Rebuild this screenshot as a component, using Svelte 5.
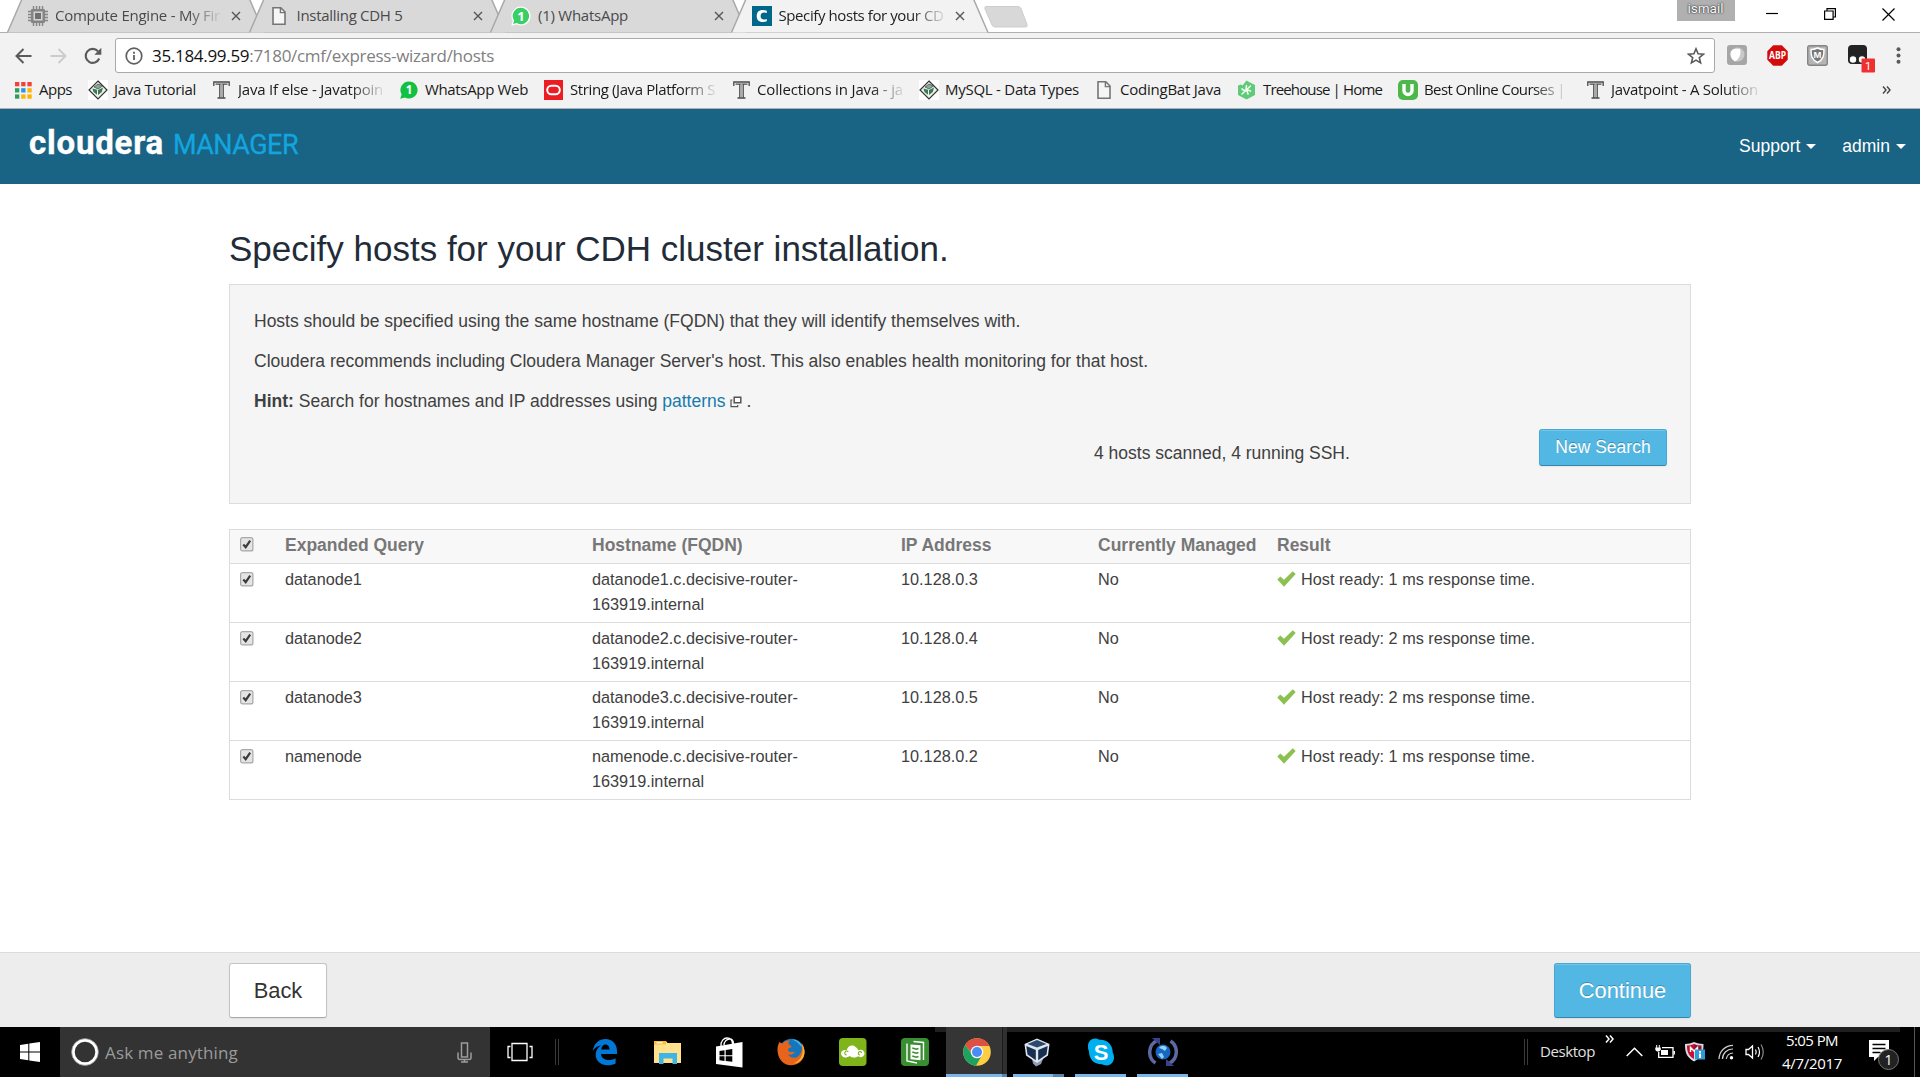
<script>
  const tabs = [
    { title: 'Compute Engine - My Fir', icon: 'chip', width: 165, fade: true },
    { title: 'Installing CDH 5', icon: 'page', width: 106 },
    { title: '(1) WhatsApp', icon: 'wa', width: 90 },
    { title: 'Specify hosts for your CD', icon: 'cdh', width: 165, fade: true, active: true }
  ];

  const bookmarks = [
    { label: 'Apps', icon: 'apps', gap: 24, span: 73, width: 33 },
    { label: 'Java Tutorial', icon: 'tp', gap: 26, span: 125, width: 82 },
    { label: 'Java If else - Javatpoin', icon: 'tee', gap: 25, span: 187, width: 145, fade: true },
    { label: 'WhatsApp Web', icon: 'wa2', gap: 25, span: 144, width: 103 },
    { label: 'String (Java Platform S', icon: 'oracle', gap: 26, span: 189, width: 145, fade: true },
    { label: 'Collections in Java - ja', icon: 'tee', gap: 24, span: 186, width: 146, fade: true },
    { label: 'MySQL - Data Types', icon: 'tp', gap: 26, span: 178, width: 134 },
    { label: 'CodingBat Java', icon: 'page', gap: 23, span: 140, width: 101 },
    { label: 'Treehouse | Home', icon: 'tree', gap: 26, span: 161, width: 119 },
    { label: 'Best Online Courses |', icon: 'udemy', gap: 26, span: 189, width: 141, fade: true },
    { label: 'Javatpoint - A Solution', icon: 'tee', gap: 24, span: 180, width: 147, fade: true }
  ];

  const rows = [
    { name: 'datanode1', ip: '10.128.0.3', ms: 1 },
    { name: 'datanode2', ip: '10.128.0.4', ms: 2 },
    { name: 'datanode3', ip: '10.128.0.5', ms: 2 },
    { name: 'namenode', ip: '10.128.0.2', ms: 1 }
  ];

  const apps = [
    { icon: 'edge' }, { icon: 'files' }, { icon: 'store' }, { icon: 'firefox' }, { icon: 'cloud' }, { icon: 'docs' },
    { icon: 'chrome', active: true, stacked: true }, { icon: 'vbox', open: true, stacked: true },
    { icon: 'skype', open: true }, { icon: 'sync', open: true }
  ];

  // Spreads a label's letters so that it takes up the given width.
  function fit(node, width) {
    node.style.letterSpacing = '0px';
    const natural = node.getBoundingClientRect().width;
    node.style.letterSpacing = `${(width - natural) / node.textContent.length}px`;
  }
</script>

{#snippet glyph(kind)}
  {#if kind === 'chip'}
    <svg width="20" height="20" viewBox="0 0 20 20"><path d="M5.5 0v20M8.5 0v20M11.5 0v20M14.5 0v20M0 5.5h20M0 8.5h20M0 11.5h20M0 14.5h20" stroke="#858585" stroke-width="1.4" /><rect x="3" y="3" width="14" height="14" rx="1" fill="#858585" /><rect x="5.5" y="5.5" width="9" height="9" fill="#d4d4d4" /><rect x="7" y="7" width="6" height="6" fill="#707070" /></svg>
  {:else if kind === 'page'}
    <svg width="14" height="20" viewBox="0 0 14 20"><path d="M1 1.8h7.8L13 6v12.2H1z" fill="#f6f6f6" stroke="#757575" stroke-width="1.6" /><path d="M8.4 2v4.6H13" fill="none" stroke="#757575" stroke-width="1.4" /></svg>
  {:else if kind === 'wa' || kind === 'wa2'}
    <svg width={kind === 'wa' ? 20 : 18} height={kind === 'wa' ? 20 : 18} viewBox="0 0 20 20"><path d="M10 .5a9.5 9.5 0 1 1-4.6 17.8L.3 19.8l1.5-5A9.5 9.5 0 0 1 10 .5z" fill={kind === 'wa' ? '#fff' : '#12c144'} /><path d="M10 1.8A8.2 8.2 0 1 1 5.6 17l-3.5 1 1-3.4A8.2 8.2 0 0 1 10 1.8z" fill={kind === 'wa' ? '#3ace67' : '#12c144'} /><text x="10" y="14.6" text-anchor="middle" font-family="Open Sans" font-weight="700" font-size="13" fill="#fff">1</text></svg>
  {:else if kind === 'cdh'}
    <svg width="20" height="20" viewBox="0 0 20 20"><rect width="20" height="20" fill="#00678a" /><path d="M14.8 7V4.8C11.5 3.300 4.700 3 4.700 10s6.800 6.700 10.100 5.200V13c-2.400 1-6.200 1-6.200-3s3.800-4 6.200-3z" fill="#fff" /></svg>
  {:else if kind === 'apps'}
    <svg width="17" height="17" viewBox="0 0 17 17">
      {#each ['#f44336', '#f44336', '#f44336', '#2da05f', '#2196f3', '#ffb300', '#2da05f', '#ffb300', '#ffb300'] as c, i}
        <rect x={(i % 3) * 6.2} y={Math.floor(i / 3) * 6.2} width="4.300" height="4.300" fill={c} />
      {/each}
    </svg>
  {:else if kind === 'tp'}
    <svg width="20" height="20" viewBox="0 0 20 20"><rect width="20" height="20" fill="#fff" /><path d="M10 1l9 9-9 9-9-9z" fill="#eef2ef" stroke="#333" stroke-width="1.200" /><path d="M4.500 8.500l4.500 1.200v5L5.500 12zM10 10l5-2.500-1.200 4.500-3.800 3z" fill="#3c7a55" /><path d="M6 7l4-3 4.500 2-4.500 3z" fill="#86a894" stroke="#444" stroke-width=".7" /></svg>
  {:else if kind === 'tee'}
    <svg width="17" height="18" viewBox="0 0 17 18"><path d="M.8 5V1h15.400v4M6.800 3v13.500M10.200 3v13.500M4.500 17h8M2.500 3.200h12" fill="none" stroke="#4a4a4a" stroke-width="1.300" /><path d="M8.500 2v14" stroke="#aaa" stroke-width="2" /></svg>
  {:else if kind === 'oracle'}
    <svg width="19" height="20" viewBox="0 0 19 20"><rect width="19" height="20" fill="#ec1c24" /><rect x="3.200" y="5.800" width="12.600" height="8.400" rx="4.200" fill="none" stroke="#fff" stroke-width="2" /></svg>
  {:else if kind === 'tree'}
    <svg width="19" height="20" viewBox="0 0 19 20"><path d="M9.500.5l3 1.800 5.500 2.700v10l-8.500 4.500L1 15V5.500l3-1 1.500 1z" fill="#5fca78" /><path d="M5 14L13.500 6M9 9.500L9.500 5.500M9.500 9.500l4 1.500M8 11l-3-2M10 11l1 3" stroke="#f0fff0" stroke-width="1.600" fill="none" stroke-linecap="round" /></svg>
  {:else if kind === 'udemy'}
    <svg width="20" height="20" viewBox="0 0 20 20"><rect width="20" height="20" rx="5" fill="#4cb84a" /><path d="M6 4v6.500a4 4 0 0 0 8 0V4" fill="none" stroke="#fff" stroke-width="3.400" /></svg>
  {:else if kind === 'edge'}
    <svg width="26" height="28" viewBox="0 0 26 28"><path d="M.8 12.700C2 5.500 7 1 13.500 1 20.500 1 25 6 25 13v3H9c.3 4 4 6 8 6 2.500 0 4.700-.7 6.600-1.800v5.300C21.500 26.700 18.800 27.300 16 27.300c-7.500 0-12.300-4.300-12.300-10.500 0-4.300 2.300-7.600 5.800-9.600C5.700 7.700 2.700 9.700.8 12.700zM9.200 11.500h8.300c0-3.300-1.600-5-4.100-5-2.300 0-3.900 2-4.200 5z" fill="#0078d7" /></svg>
  {:else if kind === 'files'}
    <svg width="28" height="24" viewBox="0 0 28 24"><path d="M1 1h12l1.500 2H28v20H1z" fill="#ffe18e" /><path d="M1 1h12v3.500H1z" fill="#fbc02d" /><path d="M3.500 2.200h6v1.200h-6z" fill="#fff" /><path d="M6 24V13h18v11h-4.500v-5.500h-9V24z" fill="#3fb5e5" /></svg>
  {:else if kind === 'store'}
    <svg width="27" height="31" viewBox="0 0 27 31"><path d="M0 9.500L26.500 5v25.500L0 27z" fill="#fff" /><path d="M5 9C4.500 4 8 1 11 1c3.500 0 5.500 2.500 5.500 6M8 8c0-3 2.500-6 5.500-6 3 0 4 2 4 5" fill="none" stroke="#fff" stroke-width="1.300" /><path d="M3.500 14l5-.8v5h-5zM9.700 13l6.600-1v6.200H9.700zM3.500 19.300h5v4.600l-5-.6zM9.700 19.300h6.600v5.500l-6.600-.8z" fill="#000" /></svg>
  {:else if kind === 'firefox'}
    <svg width="28" height="28" viewBox="0 0 28 28"><circle cx="14.500" cy="13.500" r="12.800" fill="#1676bd" /><path d="M15 1.200A12.700 12.700 0 0 1 26 10l-6-6z" fill="#52bce9" /><path d="M2.500 4C0 8 .5 12 .7 14c.4 7 6 13.300 13.300 13.300S27.500 22 27.500 14c0-4-1.500-7.500-3-9 1 5 .5 10-3.200 13.200-4 3.300-9 1-10-1.700 3 .7 5-.6 6.700-2-1.500-1.200-3-.7-5-.5-2-.5-2.500-2.500-1.500-3.500 1-.7 2.500-.5 3-1.500 0-1-1.800-1.700-3-3-.3-1.500.5-2.700 1.500-3.700C9 2.500 7 4 6 5.500 4.500 5 3.500 5 2.500 4z" fill="#e8641b" /><path d="M24.500 6c3 8 .5 16-8 19.500 6-.5 11-5 11-11.500 0-3.500-1.300-6.500-3-8z" fill="#fbb52c" /></svg>
  {:else if kind === 'cloud'}
    <svg width="28" height="28" viewBox="0 0 28 28"><rect width="27.500" height="28" rx="4" fill="#7fb41a" /><path d="M2 15.500c0-3 3.500-4.500 5.500-3C8.500 8 13.500 6 16.500 9c1.700 1 2.500 2 2.500 3.300 3.500-1.800 7 .7 6.500 3.700-.5 3-4 4-6.500 2.300-2.500 2-7 1.200-8.500-.3C6.500 21 2 19 2 15.500z" fill="#fff" /><path d="M7.800 17a2 2 0 1 1 1.500-3.200M21 17a1.700 1.700 0 1 1 1.700-2" fill="none" stroke="#7fb41a" stroke-width="1.100" /></svg>
  {:else if kind === 'docs'}
    <svg width="28" height="28" viewBox="0 0 28 28"><rect width="28" height="28" rx="4" fill="#388e30" /><path d="M12.500 3.500l10 1v17.500M6 5.500V23l10 2" fill="none" stroke="#fff" stroke-width="1.400" /><path d="M9.500 6.500l10 .8v15l-10-1z" fill="#fff" /><path d="M11.300 10l4 1.300 2.200-.8M11.300 14l4 1.300 2.200-.8M11.300 18l4 1.300 2.200-.8" stroke="#388e30" stroke-width="1.500" fill="none" /></svg>
  {:else if kind === 'chrome'}
    <svg width="28" height="28" viewBox="0 0 28 28"><circle cx="14" cy="14" r="13.800" fill="#ffcd41" /><path d="M2.100 7A13.800 13.800 0 0 1 26.300 8H14L8.500 15z" fill="#dd5144" /><path d="M2.100 7A13.800 13.800 0 0 0 13 27.800L19 17l-9 .5z" fill="#1da261" /><circle cx="14" cy="14" r="6.300" fill="#f4f4f4" /><circle cx="14" cy="14" r="5" fill="#4a8bf5" /></svg>
  {:else if kind === 'vbox'}
    <svg class="vbox" width="26" height="29" viewBox="0 0 26 29"><path d="M8 21h11l-2 5-5 2.500-3-3z" fill="#8f9bb5" /><path d="M13 .5L25.500 6 24 17.500 13 25 2 17.500.5 6z" fill="#dfe6ee" /><path d="M13 2l9.500 4L13 9.500 3.500 6z" fill="#2c4a70" /><path d="M2.300 8l9.500 4v10.300L3.500 16.500zM23.700 8l-9.500 4v10.300l8.300-5.800z" fill="#172f50" /></svg>
  {:else if kind === 'skype'}
    <svg width="28" height="28" viewBox="0 0 28 28"><path d="M8 .5c2 0 3 .7 4.500 1.200C20 1 26 7 25.700 14.500 29 20 26 27.500 19.500 27.500c-2 0-3-.5-4.500-1.200C7 26.500 2 21 2 13.500-.5 8 1.500.5 8 .5z" fill="#00aff0" /><text x="14" y="21.500" text-anchor="middle" font-family="Liberation Sans" font-weight="700" font-size="22" fill="#fff">S</text></svg>
  {:else if kind === 'sync'}
    <svg width="30" height="30" viewBox="0 0 30 30"><circle cx="15" cy="15" r="7.500" fill="#1767c0" /><path d="M11 11c2-3 6-3 8 0l-2 3-3-2zM10 17l4-1 2 4-2 2z" fill="#8ed1f5" /><path d="M9 3.500A13 13 0 0 0 7.500 26M21 26.500A13 13 0 0 0 22.500 4" fill="none" stroke="#5d69a0" stroke-width="3.500" /><path d="M4 1h8v7zM26 29h-8v-7z" fill="#38438d" /></svg>
  {/if}
{/snippet}

{#snippet checkbox()}
  <svg class="check" width="14" height="15" viewBox="0 0 14 15"><rect x=".6" y=".6" width="12.300" height="13.300" rx="2" fill="#e4e4e4" stroke="#a8a8a8" stroke-width="1.200" /><path d="M3.300 7.500L5.700 10.200 10.200 3.700" fill="none" stroke="#3b3b3b" stroke-width="2.200" /></svg>
{/snippet}

<div class="screen">
  <div class="tabstrip">
    <div class="tabs">
      {#each tabs as tab}
        <div class="tab" class:active={tab.active}>
          <svg class="shape" width="258" height="33" viewBox="0 0 258 33"><path d="M.5 32.500L15 -1h227.500L257 32.500" /></svg>
          <span class="favicon" class:narrow={tab.icon === 'page'}>{@render glyph(tab.icon)}</span>
          <span class="title" class:fade={tab.fade}><span use:fit={tab.width}>{tab.title}</span></span>
          <svg class="close" width="10" height="10" viewBox="0 0 10 10"><path d="M1 1l8 8M9 1L1 9" stroke="#555" stroke-width="1.400" /></svg>
        </div>
      {/each}
      <svg class="newtab" width="44" height="22" viewBox="0 0 44 22"><path d="M2 .5h32q2 0 3 2l6 16q.8 2.500-1.500 2.500H11q-2 0-3-2L1 3Q.3.500 2 .5z" fill="#d8d8d8" stroke="#cdcdcd" /></svg>
    </div>
    <div class="window">
      <span class="user">ismail</span>
      <svg width="12" height="14" viewBox="0 0 12 14"><path d="M0 7.500h12" stroke="#000" stroke-width="1.200" /></svg>
      <svg width="12" height="12" viewBox="0 0 12 12"><path d="M.6 3h8.500v8.400H.6zM3 3V.6h8.400V9H9" fill="none" stroke="#000" stroke-width="1.200" /></svg>
      <svg width="13" height="13" viewBox="0 0 13 13"><path d="M.5.5l12 12M12.500.5l-12 12" stroke="#000" stroke-width="1.200" /></svg>
    </div>
  </div>

  <div class="toolbar">
    <div class="nav">
      <svg width="17" height="16" viewBox="0 0 17 16"><path d="M16.500 8H1.500M8.500 1L1.500 8l7 7" fill="none" stroke="#5a5a5a" stroke-width="2" /></svg>
      <svg width="17" height="16" viewBox="0 0 17 16"><path d="M.5 8h15M8.500 1l7 7-7 7" fill="none" stroke="#ccc" stroke-width="2" /></svg>
      <svg width="18" height="18" viewBox="0 0 18 18"><path d="M15.200 11.500A7 7 0 1 1 14 4.300" fill="none" stroke="#5a5a5a" stroke-width="2.100" /><path d="M17.300.7v7h-7z" fill="#5a5a5a" /></svg>
    </div>
    <div class="omnibox">
      <svg width="18" height="18" viewBox="0 0 18 18"><circle cx="9" cy="9" r="7.800" fill="none" stroke="#5f5f5f" stroke-width="1.700" /><path d="M9 8v5M9 4.800v1.900" stroke="#5f5f5f" stroke-width="1.800" /></svg>
      <span class="url" use:fit={342}><b>35.184.99.59</b>:7180/cmf/express-wizard/hosts</span>
      <svg class="star" width="18" height="18" viewBox="0 0 18 18"><path d="M9 1.800l2.100 5 5.300.4-4.100 3.500 1.300 5.200L9 13.100l-4.600 2.800 1.300-5.200L1.600 7.200l5.300-.4z" fill="none" stroke="#5a5a5a" stroke-width="1.600" /></svg>
    </div>
    <div class="extensions">
      <svg width="20" height="20" viewBox="0 0 20 20"><rect width="20" height="20" rx="3" fill="#a6a6a6" /><circle cx="10.500" cy="9.500" r="7" fill="#c9c9c9" /><path d="M3.500 9C3.500 4 8 3.500 13 4c1.500 4-.5 10-5 12.500C5.500 15 3.500 12.500 3.500 9z" fill="#fff" /></svg>
      <svg width="21" height="21" viewBox="0 0 21 21"><path d="M6.200.3h8.600l5.900 6v8.500l-5.900 5.900H6.200L.3 14.800V6.300z" fill="#d40b0b" /><text x="10.500" y="14.200" text-anchor="middle" textLength="17" lengthAdjust="spacingAndGlyphs" font-family="Open Sans" font-weight="700" font-size="10" fill="#fff">ABP</text></svg>
      <svg width="21" height="21" viewBox="0 0 21 21"><rect x=".7" y=".7" width="19.600" height="19.600" rx="2" fill="#b4b4b4" stroke="#858585" stroke-width="1.400" /><path d="M4 4.500q3.500 0 6.500-1.500 3 1.500 6.500 1.500c0 6-.5 10-6.500 13C4.500 14.500 4 10.500 4 4.500z" fill="#777" stroke="#fff" stroke-width="1.400" /><text x="10.500" y="13" text-anchor="middle" font-family="Liberation Sans" font-weight="700" font-size="9.500" fill="#fff">M</text></svg>
      <svg class="tamper" width="28" height="28" viewBox="0 0 28 28"><rect width="19" height="19" rx="4" fill="#232323" /><circle cx="5" cy="14.500" r="3.900" fill="#fff" stroke="#232323" stroke-width="1.300" /><circle cx="14" cy="14.500" r="3.900" fill="#fff" stroke="#232323" stroke-width="1.300" /><rect x="13.500" y="13.500" width="13.500" height="14" rx="1" fill="#ef3030" /><text x="20" y="24.500" text-anchor="middle" font-family="Roboto" font-size="11" fill="#fff">1</text></svg>
      <svg width="5" height="17" viewBox="0 0 5 17"><circle cx="2.500" cy="2.200" r="2" fill="#5a5a5a" /><circle cx="2.500" cy="8.500" r="2" fill="#5a5a5a" /><circle cx="2.500" cy="14.800" r="2" fill="#5a5a5a" /></svg>
    </div>
  </div>

  <div class="bookmarks">
    {#each bookmarks as b}
      <div class="bookmark" style:width="{b.span}px">
        <span class="bicon" style:width="{b.gap}px">{@render glyph(b.icon)}</span>
        <span class="btext" class:fade={b.fade}><span use:fit={b.width}>{b.label}</span></span>
      </div>
    {/each}
    <svg class="more" width="9" height="8" viewBox="0 0 9 8"><path d="M1 .5L4 4 1 7.500M5 .5L8 4 5 7.500" fill="none" stroke="#444" stroke-width="1.400" /></svg>
  </div>

  <header>
    <div class="brand"><span class="name" use:fit={135}>cloudera</span><span class="product" use:fit={125}>MANAGER</span></div>
    <nav>
      <span>Support<i class="caret"></i></span>
      <span>admin<i class="caret"></i></span>
    </nav>
  </header>

  <main>
    <h1>Specify hosts for your CDH cluster installation.</h1>
    <section class="panel">
      <p>Hosts should be specified using the same hostname (FQDN) that they will identify themselves with.</p>
      <p>Cloudera recommends including Cloudera Manager Server's host. This also enables health monitoring for that host.</p>
      <p><strong>Hint:</strong> Search for hostnames and IP addresses using <a href="#patterns">patterns</a><svg class="ext" width="12" height="12" viewBox="0 0 12 12"><path d="M4.200 1.200h6.600v5.600H4.200z" fill="#fff" stroke="#555" stroke-width="1.500" /><path d="M2.500 4H1v6.700h6.700V9" fill="none" stroke="#555" stroke-width="1.200" /></svg>.</p>
      <div class="scan">
        <span>4 hosts scanned, 4 running SSH.</span>
        <button class="primary">New Search</button>
      </div>
    </section>

    <div class="hosts">
      <table>
        <colgroup><col class="c1" /><col class="c2" /><col class="c3" /><col class="c4" /><col class="c5" /><col /></colgroup>
        <thead>
          <tr><th>{@render checkbox()}</th><th>Expanded Query</th><th>Hostname (FQDN)</th><th>IP Address</th><th>Currently Managed</th><th>Result</th></tr>
        </thead>
        <tbody>
          {#each rows as row}
            <tr>
              <td>{@render checkbox()}</td>
              <td>{row.name}</td>
              <td>{row.name}.c.decisive-router-<br />163919.internal</td>
              <td>{row.ip}</td>
              <td>No</td>
              <td><svg class="tick" width="19" height="16" viewBox="0 0 19 16"><path d="M.3 8.500L3.300 5.500l3.700 3.300L15.800.3l2.900 2.600L7 15.700z" fill="#8cc152" /></svg>Host ready: {row.ms} ms response time.</td>
            </tr>
          {/each}
        </tbody>
      </table>
    </div>
  </main>

  <footer>
    <button class="large">Back</button>
    <button class="large primary">Continue</button>
  </footer>

  <div class="taskbar">
    <div class="start"><svg width="20" height="20" viewBox="0 0 20 20"><path d="M0 3l8.300-1.200v7.700H0zM9.300 1.600L20 0v9.500H9.300zM0 10.500h8.300v7.700L0 17zM9.300 10.500H20V20L9.300 18.400z" fill="#fff" /></svg></div>
    <div class="search">
      <svg width="28" height="28" viewBox="0 0 28 28"><circle cx="14" cy="14" r="11.800" fill="none" stroke="#fff" stroke-width="3" /><circle cx="14" cy="14" r="13.400" fill="none" stroke="#999" stroke-width=".8" /></svg>
      <span use:fit={133}>Ask me anything</span>
      <svg class="mic" width="15" height="21" viewBox="0 0 15 21"><path d="M4.500 1h6v14h-6zM1 10.500v5q0 2 2 2h9q2 0 2-2v-5M7.500 17.500V20M4 20h7" fill="none" stroke="#9d9d9d" stroke-width="1.500" /></svg>
    </div>
    <svg class="taskview" width="26" height="20" viewBox="0 0 26 20"><path d="M5 1.500h15v17H5zM3.500 4.500H1v11h2.500M22.500 4.500H25v11h-2.500" fill="none" stroke="#fff" stroke-width="1.300" /></svg>
    <span class="grip"></span>
    <div class="apps">
      {#each apps as app}
        <div class="app" class:active={app.active} class:open={app.open} class:stacked={app.stacked}>{@render glyph(app.icon)}</div>
      {/each}
    </div>
    <div class="tray">
      <span class="grip"></span>
      <span class="desktop" use:fit={55}>Desktop</span>
      <svg class="chev" width="9" height="8" viewBox="0 0 9 8"><path d="M1 .5L4 4 1 7.500M5 .5L8 4 5 7.500" fill="none" stroke="#fff" stroke-width="1.500" /></svg>
      <svg class="up" width="17" height="10" viewBox="0 0 17 10"><path d="M.7 9L8.500 1.200 16.300 9" fill="none" stroke="#fff" stroke-width="1.500" /></svg>
      <svg class="battery" width="20" height="14" viewBox="0 0 20 14"><path d="M7 2.700h11v9.600H3.700V7" fill="none" stroke="#fff" stroke-width="1.300" /><path d="M19.200 6v3.500" stroke="#fff" stroke-width="1.500" /><path d="M6 5h7v5H6zM.3 2.500h5.500V5L4 6.500H2L.3 5zM1.200 0h1v2.500h-1zM3.800 0h1v2.500h-1z" fill="#fff" /></svg>
      <svg class="mcafee" width="20" height="20" viewBox="0 0 20 20"><path d="M0 2q5 0 9-2 4 2 9.500 2c0 8-1 12.500-9.500 17.500C1 14.500 0 10 0 2z" fill="#d5dde2" /><path d="M2 3.500q3.500 0 7-1.500v15C3 13.500 2 9 2 3.500z" fill="#c4122f" /><path d="M9 2q3.500 1.500 7.500 1.500V9H9z" fill="#9b1028" /><path d="M5.500 10V5.500l3.500 3.500 3.500-3.500v4" fill="none" stroke="#fff" stroke-width="1.400" /><rect x="10" y="7.500" width="10" height="10" fill="#2d9bd8" /><path d="M15 9v1.800M15 11.500v4.500" stroke="#fff" stroke-width="2" /></svg>
      <svg class="wifi" width="16" height="16" viewBox="0 0 16 16"><path d="M1 15A14 14 0 0 1 15 1.300M4.500 15A10 10 0 0 1 15 5M8.300 15A7 7 0 0 1 15 9" fill="none" stroke="#cfcfcf" stroke-width="1.200" /><circle cx="13.500" cy="13.700" r="1.700" fill="#fff" /></svg>
      <svg class="sound" width="20" height="18" viewBox="0 0 20 18"><path d="M1 6.500h2.500l4-3.500v12l-4-3.500H1z" fill="none" stroke="#fff" stroke-width="1.300" /><path d="M10.500 6.500q1.500 2.500 0 5M13 4q3 5 0 10" fill="none" stroke="#fff" stroke-width="1.200" /><path d="M16 1.500q4.500 7.500 0 15" fill="none" stroke="#888" stroke-width="1.200" /></svg>
      <div class="clock"><span use:fit={52}>5:05 PM</span><span use:fit={60}>4/7/2017</span></div>
      <svg class="action" width="31" height="31" viewBox="0 0 31 31"><path d="M0 0h20v17H9l-4 4v-4H0z" fill="#fff" /><path d="M3.500 4.500h13M3.500 8.500h13M3.500 12.500h8" stroke="#000" stroke-width="1.300" /><circle cx="19.500" cy="19.500" r="10" fill="#222" stroke="#777" stroke-width="1" /><text x="19.500" y="24.500" text-anchor="middle" font-family="Open Sans" font-size="14" fill="#fff">1</text></svg>
      <span class="peek"></span>
    </div>
  </div>
</div>

<style>
  :global(body) { margin: 0; background: #fff; }
  .screen { width: 1920px; height: 1077px; display: flex; flex-direction: column; overflow: hidden; font-family: 'Liberation Sans', Arial, sans-serif; color: #404040; }
  .screen svg { display: block; flex: none; }

  .tabstrip, .toolbar, .bookmarks, .taskbar { font-family: 'Open Sans', 'Noto Sans', sans-serif; font-size: 15px; white-space: nowrap; flex: none; }
  .tabstrip { height: 33px; box-sizing: border-box; border-bottom: 1px solid #b0b0b0; display: flex; justify-content: space-between; }
  .tabs { display: flex; padding-left: 7px; align-items: flex-start; }
  .tab { position: relative; width: 257px; height: 33px; margin-right: -15.500px; box-sizing: border-box; padding: 0 19px 0 21px; display: flex; align-items: center; color: #4a4a4a; }
  .tab .shape { position: absolute; left: 0; top: 0; }
  .shape path { fill: #d9d9d9; stroke: #a9a9a9; stroke-width: 1.500; }
  .tab.active { z-index: 1; color: #222; margin-left: -1px; }
  .active .shape path { fill: #f2f2f2; }
  .favicon { position: relative; width: 27px; margin-top: -1px; }
  .favicon.narrow { width: 25px; margin-left: 2px; }
  .title { position: relative; width: 165px; margin-top: -4px; line-height: 24px; }
  .title span, .btext span { display: inline-block; }
  .fade { -webkit-mask-image: linear-gradient(to right, #000 calc(100% - 32px), rgba(0, 0, 0, .1)); mask-image: linear-gradient(to right, #000 calc(100% - 32px), rgba(0, 0, 0, .1)); }
  .close { position: relative; margin: -1px 0 0 11px; }
  .newtab { margin: 6px 0 0 12px; }
  .window { display: flex; align-items: flex-start; padding-right: 25.500px; }
  .window svg { margin: 8px 0 0 46px; }
  .window svg:nth-of-type(1) { margin: 6px 0 0 31px; }
  .user { width: 58px; height: 21px; background: #b0b0b0; color: #fff; font-family: Roboto, sans-serif; font-size: 13.500px; line-height: 17px; text-align: center; text-shadow: 0 0 2px #222, 0 0 1px #222; }

  .toolbar { display: flex; align-items: center; background: #f2f2f2; box-sizing: border-box; height: 42px; padding: 2px 0; }
  .nav { width: 115px; padding-left: 15px; box-sizing: border-box; display: flex; gap: 17.500px; align-items: center; margin-top: 3px; }
  .omnibox { width: 1600px; height: 35px; box-sizing: border-box; border: 1px solid #a9a9a9; border-radius: 3px; background: #fff; display: flex; align-items: center; margin-top: 2px; padding: 0 9px 0 9px; }
  .omnibox svg { margin-top: 1px; }
  .url { font-size: 17px; line-height: 24px; color: #808080; margin: 1px 0 0 9px; }
  .url b { font-weight: 400; color: #111; }
  .star { margin-left: auto; }
  .extensions { display: flex; align-items: center; padding-left: 12px; gap: 19.500px; margin-top: 2px; }
  .tamper { margin: 7px 0 0 0; }
  .extensions svg:last-child { margin-left: .500px; }

  .bookmarks { height: 34px; box-sizing: border-box; background: #f2f2f2; border-bottom: 1px solid #b0b0b0; padding-left: 15px; display: flex; align-items: center; color: #1a1a1a; }
  .bookmark { display: flex; align-items: center; height: 28px; padding-bottom: 3px; flex: none; }
  .bicon { flex: none; }
  .btext { line-height: 24px; margin-top: -2px; }
  .more { margin: -4px 0 0 115px; }

  header { height: 75px; flex: none; background: #196384; display: flex; justify-content: space-between; color: #fff; }
  .brand { display: flex; align-items: baseline; padding: 14px 0 0 29px; line-height: 40px; height: 40px; font-family: Roboto, sans-serif; }
  .name { font-size: 33px; font-weight: 700; -webkit-text-stroke: .4px #fff; }
  .product { font-size: 27px; color: #12a5df; margin-left: 9px; -webkit-text-stroke: .3px #12a5df; }
  nav { display: flex; align-items: flex-start; gap: 26px; padding: 25px 14px 0 0; font-size: 17.500px; line-height: 25px; }
  nav span { display: flex; align-items: center; }
  .caret { border: 5px solid transparent; border-top-color: #fff; border-bottom: 0; margin-left: 6px; }

  main { flex: 1; padding: 43px 229px 0; }
  h1 { margin: 0 0 13px; font-size: 35px; line-height: 44px; font-weight: 400; color: #222c38; }
  .panel { height: 220px; box-sizing: border-box; border: 1px solid #dcdcdc; background: #f5f5f5; padding: 24px 23px 0 24px; font-size: 17.500px; line-height: 25px; }
  p { margin: 0 0 15px; }
  a { color: #187aad; text-decoration: none; }
  .ext { display: inline-block !important; margin: 0 4px 0 5px; vertical-align: -1px; }
  .scan { display: flex; justify-content: space-between; align-items: flex-start; padding-left: 840px; }
  .scan span { padding-top: 12px; }
  button { font-family: inherit; font-size: 17.500px; line-height: 25px; margin: 0; padding: 5px 0 5px; border: 1px solid #c4c4c4; border-bottom-color: #a8a8a8; border-radius: 3px; background: #fff; color: #333; box-shadow: 0 1px 2px rgba(0, 0, 0, .06); white-space: nowrap; }
  button.primary { background: #53b7e4; color: #fff; border-color: #49a8d3; border-bottom-color: #3587ad; box-shadow: inset 0 1px 0 rgba(255, 255, 255, .2), 0 1px 2px rgba(0, 0, 0, .06); text-shadow: 0 -1px 0 rgba(0, 0, 0, .25); }
  .scan button { height: 37px; width: 128px; }

  .hosts { margin-top: 25px; border: 1px solid #dcdcdc; }
  table { width: 100%; table-layout: fixed; border-spacing: 0; font-size: 16.250px; line-height: 25px; }
  .c1 { width: 45px; } .c2 { width: 307px; } .c3 { width: 309px; } .c4 { width: 197px; } .c5 { width: 179px; }
  th, td { box-sizing: border-box; vertical-align: top; text-align: left; padding: 3px 0 0 10px; white-space: nowrap; }
  th { height: 33px; background: #f8f8f8; color: #777; font-size: 17.500px; }
  td { height: 59px; border-top: 1px solid #dcdcdc; }
  .check { margin-top: 5px; }
  th .check { margin-top: 4px; }
  .tick { display: inline-block !important; vertical-align: -2px; margin-right: 5px; }

  footer { flex: none; height: 75px; box-sizing: border-box; background: #ededed; border-top: 1px solid #dcdcdc; padding: 10px 229px 0; display: flex; justify-content: space-between; align-items: flex-start; }
  .large { height: 55px; width: 98px; font-size: 21.875px; padding: 0 0 1px; }
  .large.primary { width: 137px; }

  .taskbar { height: 50px; background: linear-gradient(#1f1f1f, #1f1f1f) 935px 0 / 965px 5px no-repeat #000; display: flex; align-items: center; }
  .start { width: 60px; display: flex; justify-content: center; }
  .search { width: 430px; height: 50px; box-sizing: border-box; padding: 0 18px 0 11px; background: #333; color: #9b9b9b; display: flex; align-items: center; font-size: 17px; }
  .search span { margin-left: 6px; }
  .mic { margin-left: auto; }
  .taskview { margin-left: 17px; }
  .grip { width: 2px; height: 26px; flex: none; border: solid #3a3a3a; border-width: 0 1px; }
  .taskbar > .grip { margin-left: 22px; }
  .apps { display: flex; margin-left: 15px; }
  .app { position: relative; width: 62px; height: 50px; display: flex; align-items: center; justify-content: center; }
  .vbox { margin-right: 4px; }
  .app.active { background: linear-gradient(to right, #353535 56px, #1b1b1b 56px, #1b1b1b 57px, #303030 57px, #303030 61px, transparent 61px); }
  .app.open::after, .app.active::after { content: ''; position: absolute; left: 5px; bottom: 0; width: 51px; height: 3px; background: #77b7ee; }
  .app.active::after { left: 0; width: 61px; }
  .app.stacked::after { background: linear-gradient(to right, #77b7ee calc(100% - 5px), #5a86ac 0); }
  .app.open.stacked::after { background: linear-gradient(to right, #77b7ee calc(100% - 11px), #5a86ac 0); }
  .tray { margin-left: auto; display: flex; align-items: center; color: #fff; height: 50px; }
  .desktop { margin-left: 12px; color: #e0e0e0; margin-top: -2px; }
  .chev { margin: -27px 0 0 10px; }
  .up { margin-left: 12px; }
  .battery { margin-left: 12px; }
  .mcafee { margin-left: 10px; }
  .wifi { margin-left: 13px; }
  .sound { margin-left: 11px; }
  .clock { display: flex; flex-direction: column; align-items: center; width: 60px; margin-left: 17px; line-height: 23px; margin-top: -1px; }
  .action { margin: 7px 0 0 27px; }
  .peek { width: 5px; height: 50px; margin-left: 14px; border-left: 1px solid #555; }
</style>
